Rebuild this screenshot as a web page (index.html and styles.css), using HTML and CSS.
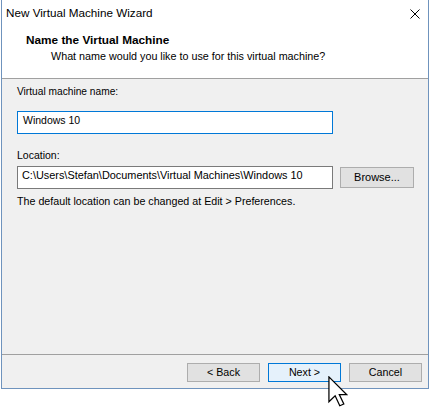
FILE: index.html
```html
<!DOCTYPE html>
<html lang="en">
<head>
<meta charset="utf-8">
<title>New Virtual Machine Wizard</title>
<link rel="stylesheet" href="styles.css">
</head>
<body>
<div class="window">
  <div class="titlebar">
    <span class="title">New Virtual Machine Wizard</span>
    <svg class="close" width="10" height="10" viewBox="0 0 10 10" aria-label="Close">
      <path d="M0.5 0.5 L9.5 9.5 M9.5 0.5 L0.5 9.5" stroke="#000" stroke-width="1" fill="none"/>
    </svg>
  </div>
  <div class="header">
    <div class="header-title">Name the Virtual Machine</div>
    <div class="header-sub">What name would you like to use for this virtual machine?</div>
  </div>
  <div class="content">
    <div class="label label-name">Virtual machine name:</div>
    <div class="field field-focus">Windows 10</div>
    <div class="label label-loc">Location:</div>
    <div class="row">
      <div class="field field-path">C:\Users\Stefan\Documents\Virtual Machines\Windows 10</div>
      <button class="btn btn-browse">Browse...</button>
    </div>
    <div class="help">The default location can be changed at Edit &gt; Preferences.</div>
  </div>
  <div class="footer">
    <button class="btn">&lt; Back</button>
    <button class="btn btn-default">Next &gt;</button>
    <button class="btn">Cancel</button>
  </div>
</div>
<div class="cursor">
  <svg width="20" height="31" viewBox="-0.6 -0.6 12.9 20">
    <path d="M0 0 V16 L4 12.2 L7 18.6 L9.6 17.5 L6.7 11.4 H11.4 Z" fill="#ffffff" stroke="#000000" stroke-width="0.8" stroke-linejoin="miter"/>
  </svg>
</div>
</body>
</html>
```

FILE: styles.css
```css
html, body {
  margin: 0;
  padding: 0;
  background: #ffffff;
}

body {
  position: relative;
  min-height: 407px;
  font-family: "Liberation Sans", Arial, sans-serif;
  color: #000000;
}

.window {
  margin-left: 1px;
  width: 428px;
  height: 389px;
  box-sizing: border-box;
  border: 1px solid #6f93bd;
  border-top: none;
  background: #f0f0f0;
  display: flex;
  flex-direction: column;
}

.titlebar {
  height: 30px;
  box-sizing: border-box;
  padding: 5px 8px 0 4px;
  background: #ffffff;
  display: flex;
  justify-content: space-between;
  align-items: flex-start;
}

.title {
  font-size: 11.7px;
  line-height: 16px;
}

.close {
  display: block;
  margin-top: 4px;
}

.header {
  background: #ffffff;
  padding: 2px 0 14px 0;
  border-bottom: 1px solid #a0a0a0;
}

.header-title {
  font-weight: bold;
  font-size: 11.8px;
  line-height: 16px;
  padding-left: 24px;
}

.header-sub {
  font-size: 10.75px;
  line-height: 16px;
  padding-left: 49px;
}

.content {
  flex: 1;
  padding: 5px 0 0 15px;
}

.label {
  line-height: 15px;
}

.label-name {
  font-size: 10.2px;
}

.label-loc {
  font-size: 10.5px;
  margin-top: 14px;
}

.field {
  width: 316px;
  height: 23px;
  box-sizing: border-box;
  border: 1px solid #7a7a7a;
  background: #ffffff;
  padding: 0 4px 4px 5px;
  font-size: 10.5px;
  line-height: 17px;
  white-space: nowrap;
  overflow: hidden;
}

.field-focus {
  margin-top: 12px;
  border-color: #0078d7;
}

.field-path {
  font-size: 10.9px;
  padding-left: 4px;
}

.row {
  display: flex;
  align-items: center;
  gap: 7px;
  margin-top: 3px;
}

.help {
  margin-top: 5px;
  font-size: 10.7px;
  line-height: 15px;
}

.footer {
  border-top: 1px solid #a0a0a0;
  padding: 8px 6px 6px 0;
  display: flex;
  justify-content: flex-end;
  gap: 8px;
}

.btn {
  width: 73px;
  height: 19px;
  box-sizing: border-box;
  margin: 0;
  padding: 0;
  border: 1px solid #adadad;
  background: #e1e1e1;
  color: #000000;
  font-family: "Liberation Sans", Arial, sans-serif;
  font-size: 10.7px;
  line-height: 17px;
  text-align: center;
}

.btn-default {
  background: #e5f1fb;
  border-color: #0078d7;
}

.btn-browse {
  width: 74px;
  height: 21px;
  font-size: 11px;
  line-height: 19px;
}

.cursor {
  position: absolute;
  left: 328px;
  top: 376px;
  width: 20px;
  height: 31px;
  z-index: 10;
}

.cursor svg {
  display: block;
}
```
